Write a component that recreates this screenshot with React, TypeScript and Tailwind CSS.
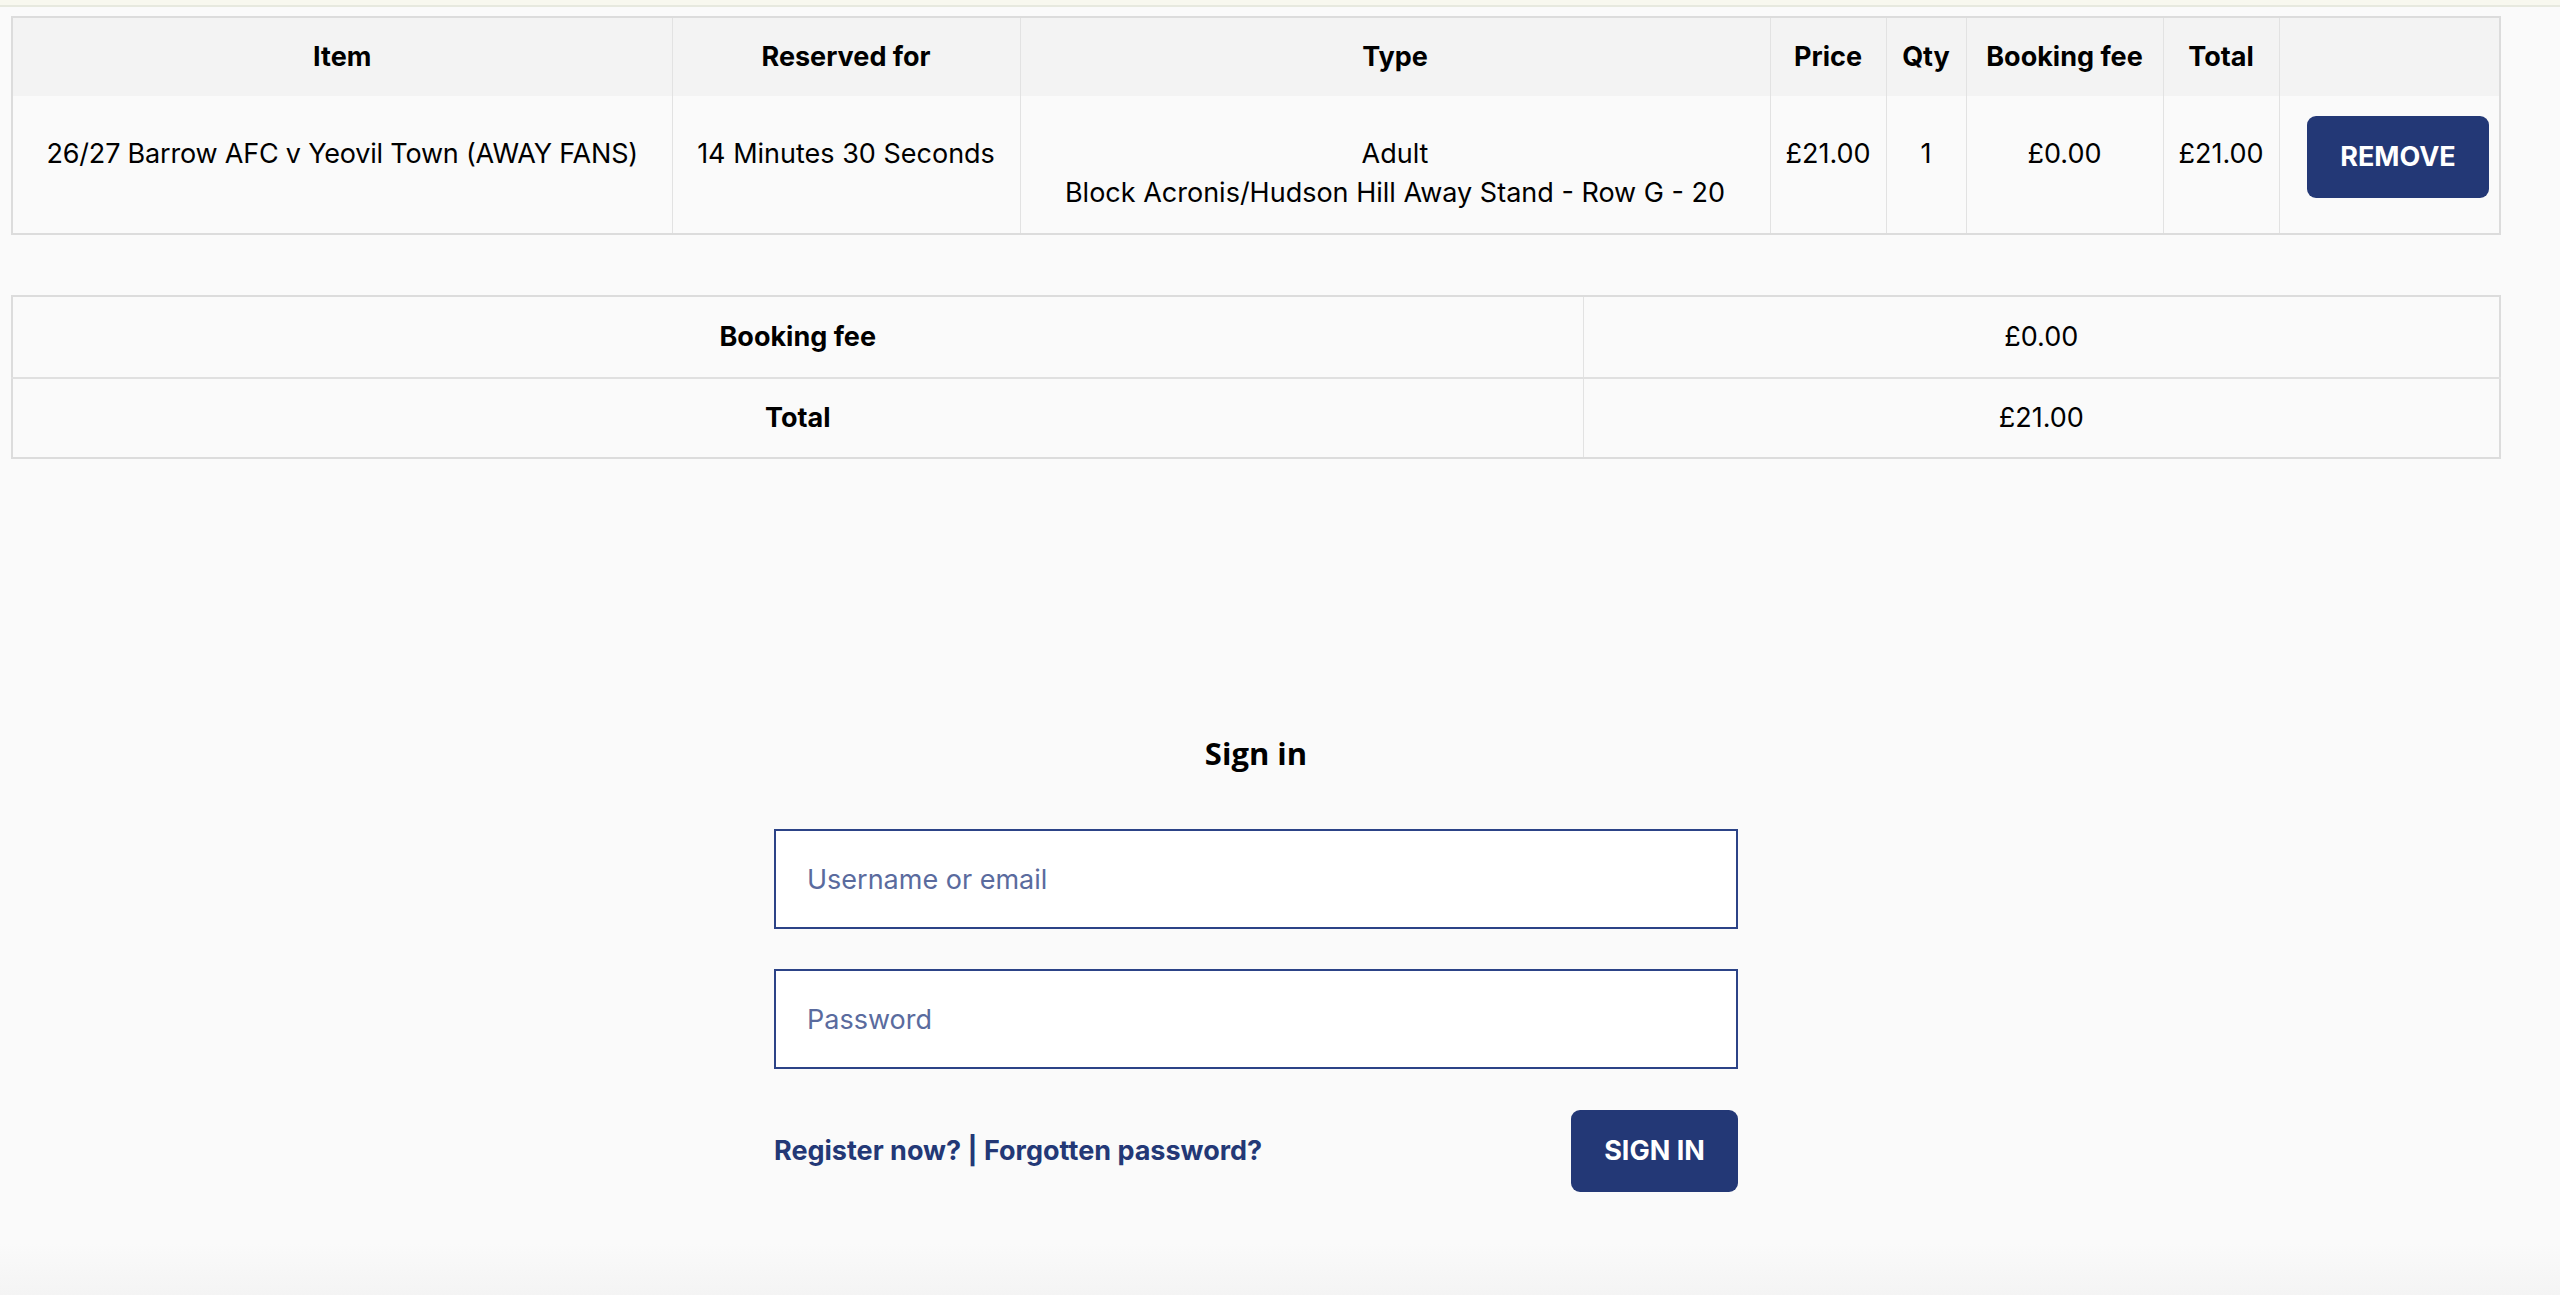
import type { ReactNode } from 'react'

const basket = {
  item: '26/27 Barrow AFC v Yeovil Town (AWAY FANS)',
  reserved: '14 Minutes 30 Seconds',
  type: 'Adult',
  seat: 'Block Acronis/Hudson Hill Away Stand - Row G - 20',
  price: '£21.00',
  qty: 1,
  fee: '£0.00',
  total: '£21.00',
}

function Th({ children }: { children?: ReactNode }) {
  return (
    <th className="h-[79px] border-x border-[#e2e2e2] px-3 text-center align-middle text-[27px] font-bold text-black">
      {children}
    </th>
  )
}

function Td({ children }: { children?: ReactNode }) {
  return (
    <td className="border-x border-[#e2e2e2] px-3 pt-[38px] text-center align-top text-[27px] leading-[39px] text-black">
      {children}
    </td>
  )
}

export default function App() {
  return (
    <div className="min-h-screen bg-[linear-gradient(to_bottom,#fafafa_96%,#f4f4f4)] font-['Inter','Liberation_Sans',sans-serif]">
      {/* strip under the browser bar */}
      <div className="h-[7px] border-b-2 border-[#e7e9df] bg-[#f8f8ef]" />

      <div className="ml-[11px] w-[2490px] pt-[9px]">
        {/* BASKET */}
        <table className="w-full table-fixed border-collapse border-2 border-[#dcdcdc]">
          <colgroup>
            <col className="w-[660px]" />
            <col className="w-[348px]" />
            <col className="w-[750px]" />
            <col className="w-[116px]" />
            <col className="w-[80px]" />
            <col className="w-[197px]" />
            <col className="w-[116px]" />
            <col />
          </colgroup>
          <thead>
            <tr className="bg-[#f3f3f3]">
              <Th>Item</Th>
              <Th>Reserved for</Th>
              <Th>Type</Th>
              <Th>Price</Th>
              <Th>Qty</Th>
              <Th>Booking fee</Th>
              <Th>Total</Th>
              <Th />
            </tr>
          </thead>
          <tbody>
            <tr className="h-[138px] bg-[#fafafa]">
              <Td>
                <span className="tracking-[-0.2px]">{basket.item}</span>
              </Td>
              <Td>{basket.reserved}</Td>
              <Td>
                {basket.type}
                <br />
                {basket.seat}
              </Td>
              <Td>{basket.price}</Td>
              <Td>{basket.qty}</Td>
              <Td>{basket.fee}</Td>
              <Td>{basket.total}</Td>
              <td className="border-x border-[#e2e2e2] pr-[10px] pt-[20px] text-right align-top">
                <button className="h-[82px] w-[182px] rounded-[9px] bg-[#233876] text-[27px] font-bold text-white">
                  REMOVE
                </button>
              </td>
            </tr>
          </tbody>
        </table>

        {/* TOTALS */}
        <table className="mt-[60px] w-full table-fixed border-collapse border-2 border-[#dcdcdc] bg-[#fafafa]">
          <colgroup>
            <col className="w-[1571px]" />
            <col />
          </colgroup>
          <tbody>
            <tr className="h-[82px] border-b-2 border-[#e0e0e0]">
              <th className="border-r border-[#e2e2e2] text-center text-[27px] font-bold text-black">Booking fee</th>
              <td className="text-center text-[27px] text-black">{basket.fee}</td>
            </tr>
            <tr className="h-[80px]">
              <th className="border-r border-[#e2e2e2] text-center text-[27px] font-bold text-black">Total</th>
              <td className="text-center text-[27px] text-black">{basket.total}</td>
            </tr>
          </tbody>
        </table>

        {/* SIGN IN */}
        <form className="mx-auto mt-[274px] flex w-[964px] flex-col" onSubmit={(e) => e.preventDefault()}>
          <h2 className="text-center font-['Open_Sans',sans-serif] text-[31px] font-bold leading-[40px] text-black">
            Sign in
          </h2>
          <input
            type="text"
            placeholder="Username or email"
            className="mt-[56px] h-[100px] border-2 border-[#2c4387] bg-white px-[31px] text-[27px] text-black outline-none placeholder:text-[#5a6b9e]"
          />
          <input
            type="password"
            placeholder="Password"
            className="mt-[40px] h-[100px] border-2 border-[#2c4387] bg-white px-[31px] text-[27px] text-black outline-none placeholder:text-[#5a6b9e]"
          />
          <div className="mt-[41px] flex items-center justify-between">
            <div className="text-[27px] font-bold text-[#233876]">
              <a href="#">Register now?</a> | <a href="#">Forgotten password?</a>
            </div>
            <button type="submit" className="h-[82px] w-[167px] rounded-[9px] bg-[#233876] text-[27px] font-bold text-white">
              SIGN IN
            </button>
          </div>
        </form>
      </div>
    </div>
  )
}
